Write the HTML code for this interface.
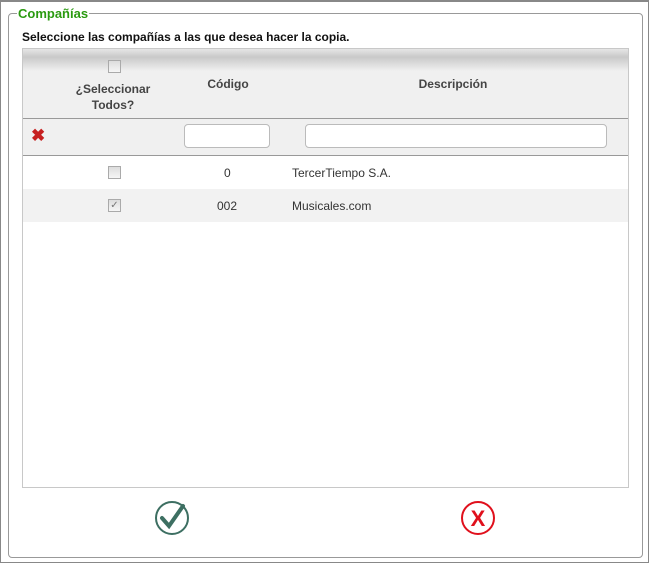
<!DOCTYPE html>
<html><head><meta charset="utf-8"><style>
*{margin:0;padding:0;box-sizing:border-box}
body{width:649px;height:563px;background:#fff;font-family:"Liberation Sans",Arial,sans-serif;position:relative;overflow:hidden}
.frame{position:absolute;left:0;top:0;width:649px;height:563px;border:1px solid #888;border-top:2px solid #888}
.fs{position:absolute;left:8px;top:13px;width:635px;height:545px;border:1px solid #999;border-radius:4px}
.lg{position:absolute;left:17px;top:6px;background:#fff;color:#2a9a10;font-weight:bold;font-size:13px;padding:0 1px}
.t{position:absolute;left:22px;top:30px;font-size:12px;font-weight:bold;color:#111}
.grid{position:absolute;left:22px;top:48px;width:607px;height:440px;border:1px solid #c8c8c8}
.hd{position:absolute;left:0;top:0;width:605px;height:70px;background:linear-gradient(#e6e6e6 0,#c9c9c9 8px,#f0f0f0 22px,#f0f0f0 100%);border-bottom:1px solid #999}
.fl{position:absolute;left:0;top:70px;width:605px;height:37px;background:#f0f0f0;border-bottom:1px solid #999}
.h{position:absolute;font-size:12px;font-weight:bold;color:#444;text-align:center}
.cb{position:absolute;width:13px;height:13px;border:1px solid #aaa;background:linear-gradient(#ddd,#f6f6f6)}
.inp{position:absolute;height:24px;background:#fff;border:1px solid #bbb;border-radius:4px}
.r{position:absolute;left:0;width:605px;height:33px;font-size:12px;color:#333}
.r span{position:absolute;top:10px}
</style></head><body>
<div class="frame"></div>
<div class="fs"></div>
<div class="lg">Compañías</div>
<div class="t">Seleccione las compañías a las que desea hacer la copia.</div>
<div class="grid">
<div class="hd">
<div class="cb" style="left:85px;top:11px"></div>
<div class="h" style="left:40px;top:32px;width:100px;line-height:16px">¿Seleccionar<br>Todos?</div>
<div class="h" style="left:170px;top:28px;width:70px">Código</div>
<div class="h" style="left:360px;top:28px;width:140px">Descripción</div>
</div>
<div class="fl">
<div style="position:absolute;left:8px;top:8px;color:#c62020;font-weight:bold;font-size:17px;line-height:17px">✖</div>
<div class="inp" style="left:161px;top:5px;width:86px"></div>
<div class="inp" style="left:282px;top:5px;width:302px"></div>
</div>
<div class="r" style="top:107px;background:#fff"><div class="cb" style="left:85px;top:10px"></div><span style="left:201px">0</span><span style="left:269px">TercerTiempo S.A.</span></div>
<div class="r" style="top:140px;background:#f2f2f2"><div class="cb" style="left:85px;top:10px;font-size:10px;line-height:11px;text-align:center;color:#777">✓</div><span style="left:194px">002</span><span style="left:269px">Musicales.com</span></div>
</div>
<svg style="position:absolute;left:154px;top:500px" width="36" height="36" viewBox="0 0 36 36"><circle cx="18" cy="18" r="16" fill="none" stroke="#3d6f62" stroke-width="2"/><path d="M8 18 L15 26 L29 6" fill="none" stroke="#3d6f62" stroke-width="4" stroke-linecap="round"/></svg>
<svg style="position:absolute;left:460px;top:500px" width="36" height="36" viewBox="0 0 36 36"><circle cx="18" cy="18" r="16" fill="none" stroke="#e0101c" stroke-width="2"/><text x="18" y="26" text-anchor="middle" font-family="Liberation Sans" font-weight="bold" font-size="22" fill="#e0101c">X</text></svg>
</body></html>
